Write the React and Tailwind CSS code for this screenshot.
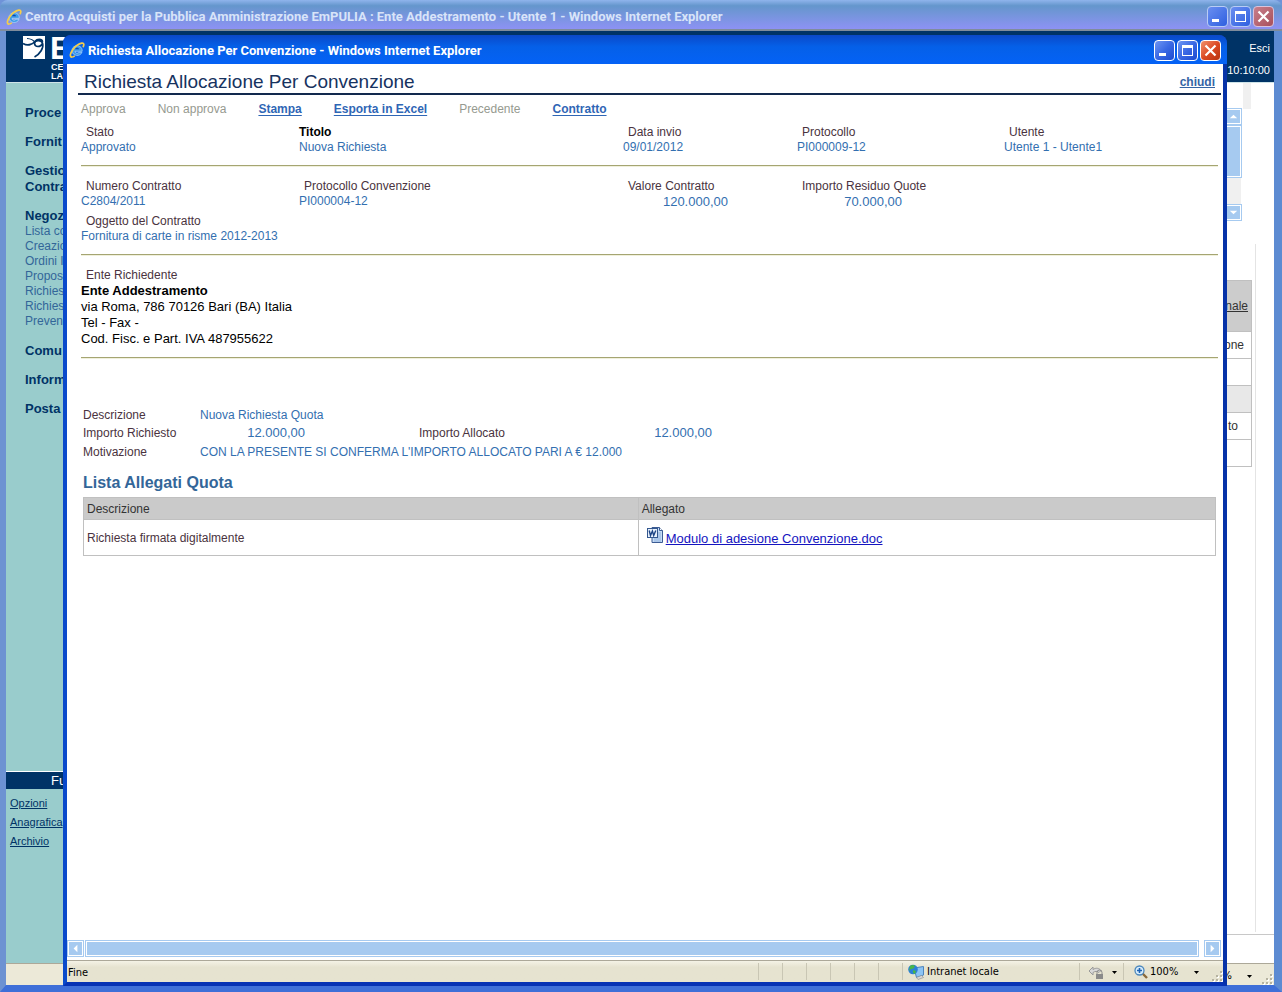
import React from "react";

function IeIcon({ className }) {
  return (
    <svg viewBox="0 0 16 16" className={className} aria-hidden="true">
      <path d="M13.200 9.300H6C6.200 11.500 9 11.800 10 10.300h3C11.500 14.900 3 14.600 3 8.500 3 2 13.800 2 13.200 9.300Z" fill="#3f9be8" stroke="#c3e6ff" strokeWidth=".6" />
      <path d="M6.100 7.200C6.500 5.300 9.600 5.300 10 7.200Z" fill="#0b4ab8" />
      <path d="M2.200 15C-1 13 6 2.200 12.800 1.100c2.600-.3 2.200 2 1.500 3.400" fill="none" stroke="#f5cd4a" strokeWidth="1.700" strokeLinecap="round" />
      <path d="M2 14.900c1.200.5 2.700-.2 3.800-1" fill="none" stroke="#f5cd4a" strokeWidth="1.300" />
    </svg>
  );
}

function WindowButton({ kind, dim }) {
  const blue = dim
    ? "bg-linear-to-br from-[#6a8ef0] to-[#2f5fe0] border-[#b9ccf5]"
    : "bg-linear-to-br from-[#6f95f2] via-[#3a68e4] to-[#1c4bd0] border-white";
  const red = dim
    ? "bg-linear-to-br from-[#c87f8c] to-[#a8505c] border-[#d9c3dd]"
    : "bg-linear-to-br from-[#f0906c] via-[#dc4a24] to-[#b83410] border-white";
  const names = { min: "Riduci a icona", max: "Ingrandisci", close: "Chiudi finestra" };
  return (
    <button type="button" aria-label={names[kind]} className={`size-[21px] shrink-0 rounded-[4px] border ${kind === "close" ? red : blue}`}>
      <svg viewBox="0 0 19 19" className="block size-full" aria-hidden="true">
        {kind === "min" && <rect x="4" y="12" width="7" height="3" fill="#fff" />}
        {kind === "max" && (
          <g fill="#fff">
            <rect x="4" y="4" width="11" height="3" />
            <path d="M4 4h11v11H4ZM5 7v7h9V7Z" fillRule="evenodd" />
          </g>
        )}
        {kind === "close" && <path d="M4.500 4.500l10 10M14.500 4.500l-10 10" stroke="#fff" strokeWidth="2.200" />}
      </svg>
    </button>
  );
}

function WindowButtons({ dim }) {
  return (
    <div className="flex gap-[2px]">
      <WindowButton kind="min" dim={dim} />
      <WindowButton kind="max" dim={dim} />
      <WindowButton kind="close" dim={dim} />
    </div>
  );
}

const arrows = {
  left: "M9 3v8L5 7Z",
  right: "M5 3v8l4-4Z",
  up: "M3 9h8L7 5Z",
  down: "M3 5h8L7 9Z",
};

function ScrollArrow({ dir, label }) {
  return (
    <button type="button" aria-label={label} className="size-[15px] shrink-0 bg-[#a6caf0] outline outline-[#a6caf0] border border-white">
      <svg viewBox="0 0 14 14" className="block size-full" aria-hidden="true">
        <path d={arrows[dir]} fill="#fff" />
      </svg>
    </button>
  );
}

function Caret() {
  return (
    <svg viewBox="0 0 5 3" className="h-[3px] w-[5px]" aria-hidden="true">
      <path d="M0 0h5L2.500 3Z" fill="#000" />
    </svg>
  );
}

function Grip() {
  const dots = [[9, 1], [5, 5], [9, 5], [1, 9], [5, 9], [9, 9]];
  return (
    <svg viewBox="0 0 12 12" className="size-3 self-end" aria-hidden="true">
      {dots.map(([x, y]) => (
        <g key={`${x}-${y}`}>
          <rect x={x + 1} y={y + 1} width="2" height="2" fill="#fff" />
          <rect x={x} y={y} width="2" height="2" fill="#b5b2a0" />
        </g>
      ))}
    </svg>
  );
}

const menu = [
  { title: ["Proce"] },
  { title: ["Fornit"] },
  { title: ["Gestio", "Contra"] },
  { title: ["Negoz"], items: ["Lista co", "Creazio", "Ordini I", "Propos", "Richies", "Richies", "Preven"] },
  { title: ["Comu"] },
  { title: ["Inform"] },
  { title: ["Posta"] },
];

function Sidebar() {
  return (
    <nav className="flex w-44 shrink-0 flex-col whitespace-nowrap bg-[#99cccc] text-[#003366]">
      <ul className="flex flex-col gap-[13px] pl-[19px] pt-[22px]">
        {menu.map((group) => (
          <li key={group.title[0]}>
            {group.title.map((line) => (
              <a key={line} href="#" className="block text-[13px] leading-4 font-bold">{line}</a>
            ))}
            {group.items && (
              <ul className="pb-px">
                {group.items.map((item, i) => (
                  <li key={i}><a href="#" className="block text-xs leading-[15px] text-[#336699]">{item}</a></li>
                ))}
              </ul>
            )}
          </li>
        ))}
      </ul>
      <div className="mt-auto h-48 shrink-0">
        <h2 className="border-t border-white bg-[#003366] pl-[45px] text-[13px] leading-[17px] text-white">Fu</h2>
        <ul className="flex flex-col gap-1 pl-1 pt-[7px] text-[11px] leading-[15px] underline">
          <li><a href="#">Opzioni</a></li>
          <li><a href="#">Anagrafica</a></li>
          <li><a href="#">Archivio</a></li>
        </ul>
      </div>
    </nav>
  );
}

function Logo() {
  return (
    <div className="flex gap-[5px] pl-[17px] pt-[5px] text-white">
      <svg viewBox="0 0 22 23" className="h-[23px] w-[22px]" aria-hidden="true">
        <rect width="22" height="23" fill="#fff" />
        <path d="M0 7.500C4 10 9 9 12 5.500 14 3 19 2.500 19.500 6" fill="none" stroke="#003366" strokeWidth="1.800" />
        <path d="M11.500 7.500c0-3.500 6.500-4 8-.5 1.500 5-2.500 11-8 14M11.500 7.500c.5 4 6 4 8 0" fill="none" stroke="#003366" strokeWidth="1.700" />
        <path d="M4 2.500c4 .2 6.500 1.500 8 4" fill="none" stroke="#003366" strokeWidth="1.200" />
      </svg>
      <div className="flex flex-col font-bold">
        <span className="text-[32px] leading-[25px]">E</span>
        <span className="mt-[2px] pl-px text-[9px] leading-[9px]">CE</span>
        <span className="pl-px text-[9px] leading-[9px]">LA</span>
      </div>
    </div>
  );
}

function BackWindow() {
  const rows = [
    { text: "one", shade: "bg-white" },
    { text: "", shade: "bg-white" },
    { text: "", shade: "bg-[#e8e8e8]" },
    { text: "to", shade: "bg-white" },
    { text: "", shade: "bg-white" },
  ];
  return (
    <div className="flex min-h-screen flex-col bg-[#6f93d8]">
      <header className="flex h-[31px] items-center justify-between rounded-t-lg border-b-2 border-[#7f8c9c] bg-linear-to-b from-[#8fb4ec] via-[#6496cc] via-20% to-[#8d92f4] pt-1 pr-2 pl-[6px]">
        <div className="flex items-center gap-[3px]">
          <IeIcon className="size-4" />
          <h1 className="whitespace-nowrap font-[Roboto,sans-serif] text-[13px] font-bold text-[#d8e4f8]">
            Centro Acquisti per la Pubblica Amministrazione EmPULIA : Ente Addestramento - Utente 1 - Windows Internet Explorer
          </h1>
        </div>
        <WindowButtons dim />
      </header>
      <div className="flex grow flex-col border-r-8 border-b-[7px] border-l-[6px] border-l-[#6d92d2] border-r-[#5d8bd2] border-b-[#3f6fd8]">
        <div className="flex h-[52px] justify-between border-b border-[#cfe4e8] bg-[#003366]">
          <Logo />
          <div className="flex flex-col items-end gap-[7px] pt-[10px] pr-1 text-[11px] leading-[15px] text-white">
            <a href="#">Esci</a>
            <time>10:10:00</time>
          </div>
        </div>
        <div className="flex grow bg-white">
          <Sidebar />
          <div className="flex grow flex-col items-end">
            <div className="mr-[23px] h-[26px] w-2 bg-[#f0f0f0]" />
            <div className="mr-[33px] flex w-[15px] flex-col gap-[2px] bg-[#f0f0f0]">
              <ScrollArrow dir="up" label="Scorri in alto" />
              <div className="h-[51px] border border-white bg-[#a6caf0] outline outline-[#a6caf0]" />
              <div className="h-6" />
              <ScrollArrow dir="down" label="Scorri in basso" />
            </div>
            <div className="mt-6 mr-[18px] flex w-[300px] grow items-start justify-end border-r border-[#e4e4e4] pt-9 pr-[3px]">
              <table className="w-full border-collapse text-right text-xs text-[#333333]">
                <thead>
                  <tr className="h-[51px]"><th className="border border-[#c0c0c0] bg-[#cccccc] pr-[3px] text-right font-normal underline">nale</th></tr>
                </thead>
                <tbody>
                  {rows.map((row, i) => (
                    <tr key={i} className={`h-[27px] ${row.shade}`}><td className={`border border-[#c0c0c0] ${row.text === "to" ? "pr-[13px]" : "pr-[7px]"}`}>{row.text}</td></tr>
                  ))}
                </tbody>
              </table>
            </div>
            <div className="mt-[2px] h-[29px] w-full border-t border-[#c8c8c8]" />
          </div>
        </div>
        <footer className="flex h-[22px] items-center justify-end gap-[9px] border-t border-[#aca899] bg-[#ece9d8] pr-px font-['DejaVu_Sans_Condensed',sans-serif] text-[11px]">
          <span className="flex items-center gap-[15px] pt-1">100% <Caret /></span>
          <Grip />
        </footer>
      </div>
    </div>
  );
}

function Field({ label, value, strong, flush, valueClass = "" }) {
  return (
    <div className="text-xs leading-[15px]">
      <dt className={`${flush ? "" : "pl-[5px]"} ${strong ? "font-bold text-black" : "text-[#4a3340]"}`}>{label}</dt>
      <dd className={`text-[#336fb0] ${valueClass}`}>{value}</dd>
    </div>
  );
}

function Rule() {
  return <hr className="mr-[5px] h-[2px] border-0 border-t border-[#a5a572] bg-[#f0f0dc]" />;
}

const grid = "grid grid-cols-[218px_324px_174px_207px_1fr]";
const amount = "w-[105px] text-right text-[13px]";

function Toolbar() {
  const off = "text-[#969a90]";
  const on = "font-bold text-[#2f66b5] underline underline-offset-2";
  return (
    <div className="flex gap-8 pt-[6px] pl-[14px] text-xs leading-4">
      <button type="button" disabled className={off}>Approva</button>
      <button type="button" disabled className={off}>Non approva</button>
      <a href="#" className={on}>Stampa</a>
      <a href="#" className={on}>Esporta in Excel</a>
      <button type="button" disabled className={off}>Precedente</button>
      <a href="#" className={on}>Contratto</a>
    </div>
  );
}

function WordIcon() {
  return (
    <svg viewBox="0 0 16 16" className="size-4" aria-hidden="true">
      <path d="M5 .5h7.500l3 3v12H5Z" fill="#c6dcf6" stroke="#3c5c94" />
      <path d="M12.500.5v3h3" fill="#fff" stroke="#3c5c94" />
      <path d="M11 6h3M11 8h3M11 10h3M7 12h7M7 14h7" stroke="#8fb0dc" />
      <rect x=".5" y="1.500" width="10" height="9" fill="#e8f1fc" stroke="#34588f" />
      <path d="M2.200 3.500l1.300 5 1.900-4.500 1.300 4.500 2.100-5" fill="none" stroke="#1e4586" strokeWidth="1.400" />
    </svg>
  );
}

function StatusBar() {
  return (
    <footer className="flex h-[22px] items-stretch border-t border-[#aca899] bg-linear-to-b from-[#f4f2e6] to-[#e6e3d0] to-30% font-['DejaVu_Sans_Condensed',sans-serif] text-[11px] text-black">
      <span className="flex grow items-center pt-[3px] pl-px">Fine</span>
      <div className="flex">
        {[0, 1, 2, 3, 4, 5].map((n) => (
          <span key={n} className="my-[2px] w-6 border-l border-[#c9c6b4]" />
        ))}
      </div>
      <span className="my-[2px] flex w-[177px] items-center gap-[3px] border-l border-[#c9c6b4] pt-px pl-[5px]">
        <svg viewBox="0 0 16 16" className="size-4" aria-hidden="true">
          <path d="M6 4l9.500-1.500v8.500l-7 2.500Z" fill="#8cc4f4" stroke="#4d84bd" />
          <path d="M8.500 13.500l5-2 2 2-5.500 2Z" fill="#d8d8d8" stroke="#8a8a8a" strokeWidth=".6" />
          <circle cx="5" cy="5.500" r="4.800" fill="#2c7fd6" />
          <path d="M2 2c2-1.500 4-1 5 0L5.500 4.500 3 5 1 7ZM5 6l3 1-1 3-2-1Z" fill="#48b548" />
        </svg>
        <span className="pt-px">Intranet locale</span>
      </span>
      <button type="button" aria-label="Protezione" className="my-[2px] flex w-11 items-center gap-2 border-l border-[#c9c6b4] pt-px pl-2">
        <svg viewBox="0 0 16 16" className="size-4" aria-hidden="true">
          <path d="M1 7l4-4v2.500c3-2 6-1.500 8 1l-2 2C9 7 7 7 5 8.500V11Z" fill="#d8d8d8" stroke="#9a9a9a" />
          <path d="M9 10V8.500a2.500 2.500 0 015 0V10" fill="none" stroke="#8a8a8a" />
          <rect x="8" y="10" width="7" height="5" fill="#8a8a8a" />
        </svg>
        <Caret />
      </button>
      <button type="button" className="my-[2px] flex w-[88px] items-center border-l border-[#c9c6b4] pt-px pl-[9px]">
        <svg viewBox="0 0 16 16" className="mr-px size-4" aria-hidden="true">
          <path d="M9.500 9.500l4.500 4.500" stroke="#8a6a3a" strokeWidth="2.400" />
          <circle cx="6.500" cy="6.500" r="4.500" fill="#d6ecfb" stroke="#4b87bd" strokeWidth="1.300" />
          <path d="M6.500 4v5M4 6.500h5" stroke="#1d62b4" strokeWidth="1.600" />
        </svg>
        <span className="pt-px">100%</span>
        <span className="ml-4"><Caret /></span>
      </button>
      <Grip />
    </footer>
  );
}

function Popup() {
  return (
    <section className="absolute top-[35px] right-[55px] bottom-[6px] left-[63px] flex flex-col rounded-t-lg bg-[#0a3fc4]">
      <header className="flex h-[29px] shrink-0 items-center justify-between rounded-t-lg bg-linear-to-b from-[#0a48c8] via-[#0560e8] via-40% to-[#0462f6] pt-px pr-[6px] pl-[6px]">
        <div className="flex items-center gap-[3px]">
          <IeIcon className="size-4" />
          <h2 className="whitespace-nowrap pt-[2px] font-[Roboto,sans-serif] text-[13px] font-bold text-white">
            Richiesta Allocazione Per Convenzione - Windows Internet Explorer
          </h2>
        </div>
        <WindowButtons />
      </header>
      <div className="flex grow flex-col border-x-4 border-b-4 border-l-[#0a4acb] border-r-[#0632a8] border-b-[#0632b4] bg-white">
        <main className="grow">
          <div className="mr-[2px] ml-[11px] flex items-end justify-between border-b-2 border-[#12294d] pt-[5px] pr-[6px] pl-[6px]">
            <h3 className="pt-[2px] text-[19px] leading-[22px] text-[#17335f]">Richiesta Allocazione Per Convenzione</h3>
            <a href="#" className="text-xs leading-[22px] font-bold text-[#3565a5] underline">chiudi</a>
          </div>
          <Toolbar />
          <div className="pl-[14px]">
            <dl className={`${grid} pt-2 pb-[10px]`}>
              <Field label="Stato" value="Approvato" />
              <Field label="Titolo" value="Nuova Richiesta" strong flush />
              <Field label="Data invio" value="09/01/2012" />
              <Field label="Protocollo" value="PI000009-12" />
              <Field label="Utente" value="Utente 1 - Utente1" />
            </dl>
            <Rule />
            <dl className={`${grid} gap-y-[5px] pt-3 pb-[10px]`}>
              <Field label="Numero Contratto" value="C2804/2011" />
              <Field label="Protocollo Convenzione" value="PI000004-12" />
              <Field label="Valore Contratto" value="120.000,00" valueClass={amount} />
              <Field label="Importo Residuo Quote" value="70.000,00" valueClass={amount} />
              <div className="col-start-1 col-end-3 row-start-2">
                <Field label="Oggetto del Contratto" value="Fornitura di carte in risme 2012-2013" />
              </div>
            </dl>
            <Rule />
            <div className="pt-[11px] pb-[10px]">
              <p className="pl-[5px] text-xs leading-4 text-[#4a3340]">Ente Richiedente</p>
              <address className="text-[13px] leading-4 text-black not-italic">
                <strong className="block">Ente Addestramento</strong>
                via Roma, 786 70126 Bari (BA) Italia<br />
                Tel - Fax -<br />
                Cod. Fisc. e Part. IVA 487955622
              </address>
            </div>
            <Rule />
          </div>
          <div className="mt-[47px] mr-[7px] ml-4">
            <dl className="grid grid-cols-[117px_219px_188px_1fr] text-xs leading-[18px] text-[#336fb0]">
              <dt className="text-[#4a3340]">Descrizione</dt>
              <dd className="col-span-3">Nuova Richiesta Quota</dd>
              <dt className="text-[#4a3340]">Importo Richiesto</dt>
              <dd className={amount}>12.000,00</dd>
              <dt className="text-[#4a3340]">Importo Allocato</dt>
              <dd className={amount}>12.000,00</dd>
              <dt className="pt-px text-[#4a3340]">Motivazione</dt>
              <dd className="col-span-3 pt-px">CON LA PRESENTE SI CONFERMA L'IMPORTO ALLOCATO PARI A € 12.000</dd>
            </dl>
            <h4 className="pt-3 pb-1 text-base leading-5 font-bold text-[#336699]">Lista Allegati Quota</h4>
            <table className="w-full border-collapse border border-[#c4c4c4] text-left text-xs text-[#333333]">
              <thead>
                <tr className="h-[22px] bg-[#cacaca]">
                  <th className="w-[49%] border border-[#c0c0c0] pl-[3px] font-normal">Descrizione</th>
                  <th className="border border-[#c0c0c0] pl-[3px] font-normal">Allegato</th>
                </tr>
              </thead>
              <tbody>
                <tr className="h-9">
                  <td className="border border-[#c0c0c0] pl-[3px] text-[#4a3340]">Richiesta firmata digitalmente</td>
                  <td className="border border-[#c0c0c0] pl-2">
                    <a href="#" className="flex items-start gap-[3px] text-[13px] leading-5 text-[#1414c0]">
                      <WordIcon />
                      <span className="pt-[2px] underline">Modulo di adesione Convenzione.doc</span>
                    </a>
                  </td>
                </tr>
              </tbody>
            </table>
          </div>
        </main>
        <div className="mb-[3px] flex shrink-0 items-center gap-[3px] py-px pr-[3px] pl-px">
          <ScrollArrow dir="left" label="Scorri a sinistra" />
          <div className="h-[15px] grow border border-white bg-[#a6caf0] outline outline-[#a6caf0]" />
          <span className="w-px" />
          <ScrollArrow dir="right" label="Scorri a destra" />
        </div>
        <StatusBar />
      </div>
    </section>
  );
}

export default function App() {
  return (
    <div className="relative min-h-screen overflow-hidden font-['Liberation_Sans',Arial,sans-serif]">
      <BackWindow />
      <Popup />
    </div>
  );
}
